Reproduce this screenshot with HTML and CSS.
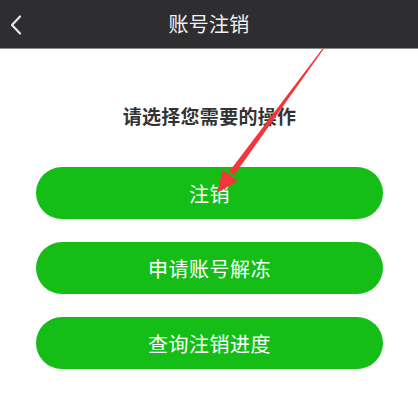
FILE: index.html
```html
<!DOCTYPE html>
<html lang="zh-CN">
<head>
<meta charset="utf-8">
<title>账号注销</title>
<link rel="stylesheet" href="styles.css">
</head>
<body>
<div class="page">
  <header class="topbar">
    <span class="back">
      <svg width="14" height="22" viewBox="0 0 14 22"><polyline points="11,2.5 3,11 11,19.5" fill="none" stroke="#e6e6e6" stroke-width="2.2" stroke-linecap="round" stroke-linejoin="round"/></svg>
    </span>
    <h1 class="title">账号注销</h1>
  </header>
  <main class="content">
    <p class="prompt">请选择您需要的操作</p>
    <div class="actions">
      <button class="btn">注销</button>
      <button class="btn">申请账号解冻</button>
      <button class="btn">查询注销进度</button>
    </div>
  </main>
  <svg class="arrow" width="418" height="404" viewBox="0 0 418 404">
    <polygon points="323.5,49.3 322.6,48.6 229.1,171.8 233.9,175.4" fill="#f2363a"/>
    <polygon points="217,193 222.6,169.7 237.8,181.1" fill="#f2363a"/>
  </svg>
</div>
</body>
</html>
```
FILE: styles.css
```css
html, body {
  margin: 0;
  padding: 0;
  background: #ffffff;
}
body {
  font-family: "Noto Sans CJK SC", "Noto Sans", sans-serif;
}
.page {
  position: relative;
  width: 418px;
  height: 404px;
  overflow: hidden;
}
.topbar {
  height: 48px;
  background: #2e2e30;
  border-bottom: 1px solid #8a8a8a;
  display: flex;
  align-items: center;
  justify-content: center;
  position: relative;
}
.back {
  position: absolute;
  left: 9px;
  top: 14px;
  display: flex;
}
.title {
  margin: 0;
  font-size: 20px;
  font-weight: 400;
  color: #f2f2f2;
  line-height: 28px;
  letter-spacing: 0.3px;
}
.content {
  padding: 53px 35px 0 36px;
  display: flex;
  flex-direction: column;
}
.prompt {
  margin: 0;
  text-align: center;
  font-size: 19px;
  line-height: 28px;
  font-weight: 700;
  color: #333333;
  letter-spacing: 0.3px;
}
.actions {
  margin-top: 37px;
  display: flex;
  flex-direction: column;
  gap: 23px;
}
.btn {
  height: 52px;
  border: none;
  border-radius: 26px;
  background: #14be16;
  color: #ffffff;
  font-family: "Noto Sans CJK SC", "Noto Sans", sans-serif;
  font-size: 20px;
  padding: 0;
  letter-spacing: 0.5px;
}
.arrow {
  position: absolute;
  left: 0;
  top: 0;
  pointer-events: none;
}
```
